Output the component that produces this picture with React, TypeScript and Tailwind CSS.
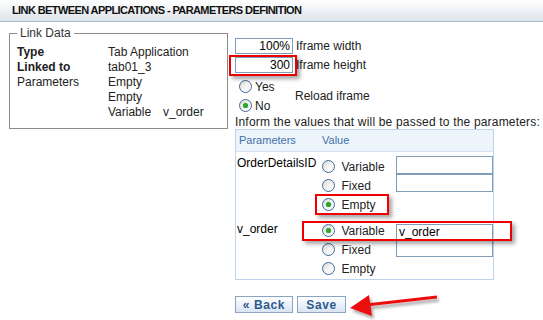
import React from 'react';

const font = { fontFamily: '"Liberation Sans", Arial, sans-serif' };

function Radio({ checked }: { checked?: boolean }) {
  return (
    <span className="inline-flex h-[13px] w-[13px] shrink-0 items-center justify-center rounded-full border border-[#41689a] bg-gradient-to-br from-[#d9d9d4] via-[#f4f4f2] to-white">
      {checked && <span className="h-[5px] w-[5px] rounded-full bg-[#2ea32e] shadow-[0_0_1px_#63c963]" />}
    </span>
  );
}

// radio + label used inside the parameters table
function Choice({ label, checked }: { label: string; checked?: boolean }) {
  return (
    <div className="flex h-[19px] items-center gap-[6px]">
      <Radio checked={checked} />
      <span className="text-[12px] text-[#222]">{label}</span>
    </div>
  );
}

// red annotation boxes drawn over the screenshot
function Mark({ className }: { className: string }) {
  return <div className={`pointer-events-none absolute border-2 border-[#ee0000] shadow-[3px_3px_4px_rgba(0,0,0,0.35)] ${className}`} />;
}

export default function App() {
  return (
    <div className="relative h-[320px] w-[543px] overflow-hidden bg-white" style={font}>
      {/* cabeçalho */}
      <div className="flex h-[22px] items-center border-b border-[#aeb9c6] bg-gradient-to-b from-white to-[#dde3ea] pl-[12px]">
        <h1 className="text-[11px] font-bold tracking-[-0.6px] text-[#111]">
          LINK BETWEEN APPLICATIONS - PARAMETERS DEFINITION
        </h1>
      </div>

      <div className="flex items-start">
        {/* Link Data */}
        <fieldset className="ml-[9px] mt-[4px] w-[219px] border border-[#8c8c8c] pb-[8px] pl-[7px]">
          <legend className="px-[3px] text-[12px] leading-[14px] text-[#333]">Link Data</legend>
          <div className="grid grid-cols-[91px_1fr] pt-[5px] text-[12px] leading-[15px] text-[#222]">
            <span className="font-bold">Type</span>
            <span>Tab Application</span>
            <span className="font-bold">Linked to</span>
            <span>tab01_3</span>
            <span>Parameters</span>
            <span>Empty</span>
            <span />
            <span>Empty</span>
            <span />
            <span className="flex">
              <span className="w-[55px]">Variable</span>
              <span>v_order</span>
            </span>
          </div>
        </fieldset>

        {/* iframe options and parameters */}
        <div className="ml-[7px] mt-[14px] flex flex-col text-[12px] text-[#222]">
          <div className="flex h-[19px] items-center gap-[3px]">
            <input
              readOnly
              value="100%"
              className="h-[16px] w-[58px] border border-[#7f9db9] pr-[2px] text-right text-[12px] text-black outline-none"
            />
            <span>Iframe width</span>
          </div>
          <div className="flex h-[19px] items-center gap-[3px]">
            <input
              readOnly
              value="300"
              className="h-[16px] w-[58px] border border-[#7f9db9] pr-[2px] text-right text-[12px] text-black outline-none"
            />
            <span>Iframe height</span>
          </div>

          <div className="mt-[3px] flex items-center">
            <div className="flex w-[60px] flex-col pl-[4px]">
              <div className="flex h-[19px] items-center gap-[3px]">
                <Radio />
                <span>Yes</span>
              </div>
              <div className="flex h-[19px] items-center gap-[3px]">
                <Radio checked />
                <span>No</span>
              </div>
            </div>
            <span>Reload iframe</span>
          </div>

          <div className="h-[14px] leading-[14px] tracking-[0.18px] whitespace-nowrap">
            Inform the values that will be passed to the parameters:
          </div>

          <div className="w-[259px] border border-[#bcd4ef]">
            <div className="flex h-[22px] items-center border-b border-[#d3e3f5] bg-[#eef4fb] text-[11px] text-[#3e70ab]">
              <span className="w-[86px] pl-[3px]">Parameters</span>
              <span>Value</span>
            </div>

            <div className="flex h-[64px]">
              <span className="w-[87px] pl-[1px] pt-[4px] leading-[14px] text-black">OrderDetailsID</span>
              <div className="flex w-[74px] flex-col pt-[5px]">
                <Choice label="Variable" />
                <Choice label="Fixed" />
                <Choice label="Empty" checked />
              </div>
              <div className="flex flex-col pt-[4px]">
                <div className="h-[18px] w-[97px] border border-[#7f9db9]" />
                <div className="h-[18px] w-[97px] border border-[#7f9db9]" />
              </div>
            </div>

            <div className="flex h-[63px]">
              <span className="w-[87px] pl-[1px] pt-[6px] leading-[14px] text-black">v_order</span>
              <div className="flex w-[74px] flex-col pt-[5px]">
                <Choice label="Variable" checked />
                <Choice label="Fixed" />
                <Choice label="Empty" />
              </div>
              <div className="pt-[8px]">
                <div className="h-[33px] w-[97px] border border-[#7f9db9] px-[2px] leading-[14px] text-black">v_order</div>
              </div>
            </div>
          </div>

          <div className="mt-[16px] flex gap-[4px]">
            <button className="h-[17px] w-[58px] border border-[#8aa4c2] bg-gradient-to-b from-white to-[#d9e5f3] text-[12px] leading-none font-bold tracking-[0.6px] text-[#2d5a8c]">
              « Back
            </button>
            <button className="h-[17px] w-[49px] border border-[#8aa4c2] bg-gradient-to-b from-white to-[#d9e5f3] text-[12px] leading-none font-bold tracking-[0.6px] text-[#2d5a8c]">
              Save
            </button>
          </div>
        </div>
      </div>

      {/* annotations */}
      <Mark className="left-[229px] top-[55px] h-[21px] w-[68px]" />
      <Mark className="left-[315px] top-[194px] h-[21px] w-[74px]" />
      <Mark className="left-[302px] top-[221px] h-[20px] w-[210px]" />
      <svg className="pointer-events-none absolute left-0 top-0" width="543" height="320">
        <defs>
          <filter id="sh" x="-20%" y="-50%" width="140%" height="200%">
            <feDropShadow dx="2" dy="3" stdDeviation="1.5" floodColor="#000" floodOpacity="0.35" />
          </filter>
        </defs>
        <g filter="url(#sh)">
          <line x1="437" y1="297" x2="366" y2="305" stroke="#ee1111" strokeWidth="3" />
          <polygon points="350,308 369,295 372,316" fill="#ee1111" />
        </g>
      </svg>
    </div>
  );
}
